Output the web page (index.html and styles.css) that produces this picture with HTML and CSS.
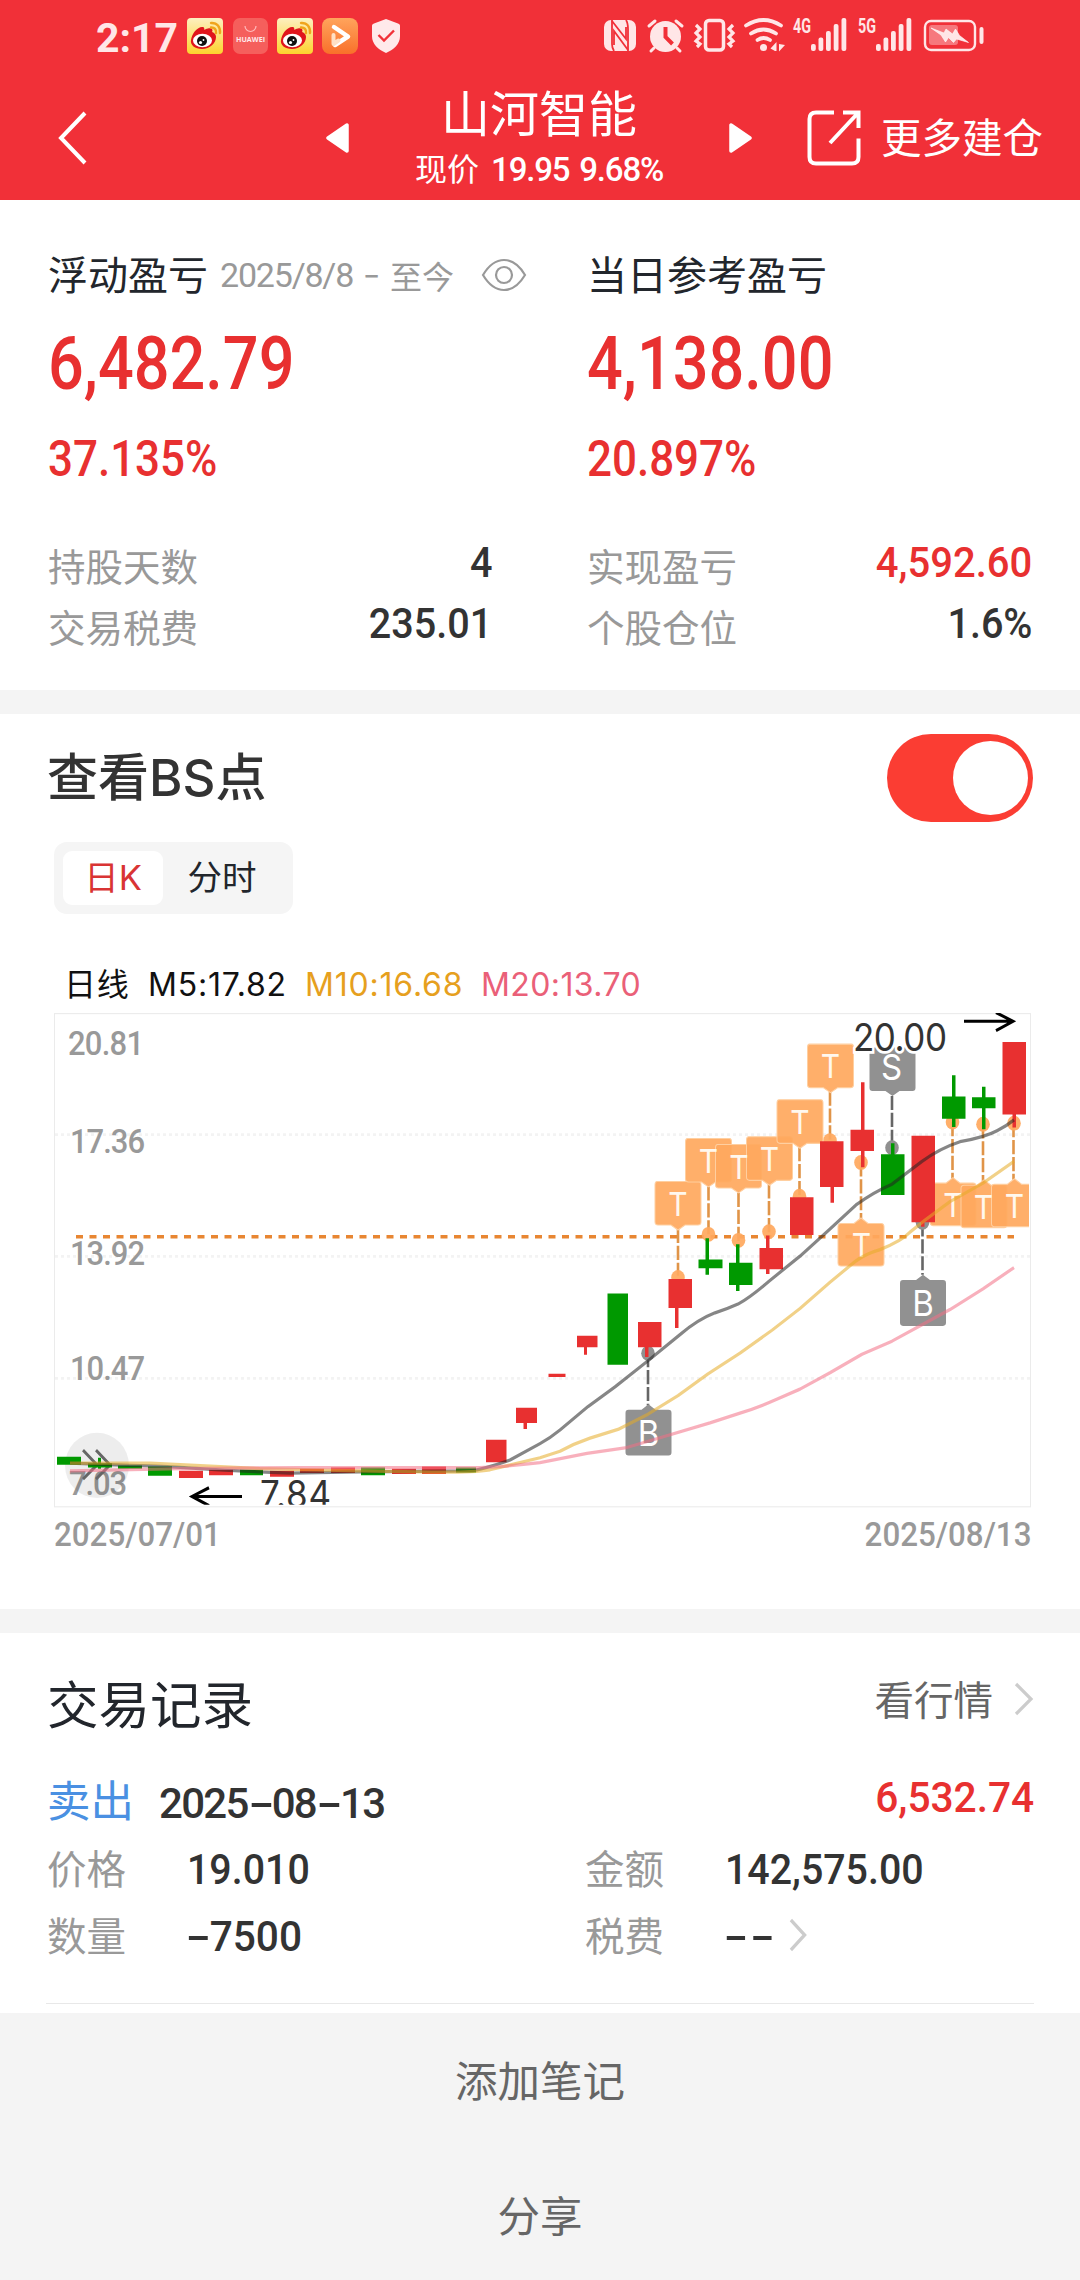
FILE: index.html
```html
<!DOCTYPE html>
<html lang="zh-CN">
<head>
<meta charset="utf-8">
<title>山河智能</title>
<link rel="stylesheet" href="styles.css">
</head>
<body>
<header class="header">
  <div class="status">
    <span class="clock">2:17</span>
    <svg class="app" width="36" height="36" viewBox="0 0 36 36">
      <defs>
        <linearGradient id="wb" x1="0" y1="0" x2="0" y2="1"><stop offset="0" stop-color="#fdf0c0"/><stop offset="1" stop-color="#fdd32e"/></linearGradient>
        <linearGradient id="pl" x1="0" y1="0" x2="0" y2="1"><stop offset="0" stop-color="#ffa45c"/><stop offset="1" stop-color="#f9702a"/></linearGradient>
        <g id="weibo">
          <rect width="36" height="36" rx="4" fill="url(#wb)"/>
          <path d="M4 22C5 15 11 8 16 9c2 .4 1 3 1 3s6-3 8-1c1 1 0 3 0 3s4 1 4 5c0 6-6 12-14 12C8 31 3 27 4 22z" fill="#e0151c"/>
          <ellipse cx="15.500" cy="22.500" rx="9.500" ry="6.700" fill="#fff"/>
          <circle cx="15" cy="23" r="5" fill="#111"/>
          <circle cx="13.500" cy="24.500" r="1.600" fill="#fff"/><circle cx="16.500" cy="22" r=".9" fill="#fff"/>
          <path d="M24 5c6-.5 9.500 4 9 10M24 9.500c3.500-.2 5.500 2 5 5.500" fill="none" stroke="#f0a51c" stroke-width="2.400" stroke-linecap="round"/>
        </g>
      </defs>
      <use href="#weibo"/>
    </svg>
    <svg class="app app-mall" width="35" height="36" viewBox="0 0 35 36">
      <rect width="35" height="36" rx="7" fill="#f55f5c"/>
      <path d="M12 8a5.500 5.500 0 0 0 11 0" fill="none" stroke="#fbb" stroke-width="1.200"/>
      <text x="17.500" y="24" class="mall-name" textLength="29" lengthAdjust="spacingAndGlyphs">HUAWEI</text>
    </svg>
    <svg class="app" width="36" height="36" viewBox="0 0 36 36"><use href="#weibo"/></svg>
    <svg class="app" width="36" height="36" viewBox="0 0 36 36">
      <rect width="36" height="36" rx="8" fill="url(#pl)"/>
      <path d="M12 9l14 9.500L13 27" fill="none" stroke="#fff" stroke-width="4.500" stroke-linecap="round" stroke-linejoin="round"/>
      <path d="M11.500 17v9l5-3.500" fill="none" stroke="#ffe0c4" stroke-width="4" stroke-linecap="round" stroke-linejoin="round"/>
    </svg>
    <svg class="shield" width="28" height="34" viewBox="0 0 28 34">
      <path d="M14 0l12 4.500c1.500.6 2 1 2 2.500v10c0 8-6 13.500-14 17C6 30.500 0 25 0 17V7c0-1.500.5-1.900 2-2.500z" fill="#ffe9ea"/>
      <path d="M6.500 16l5.500 5.500 10-10" fill="none" stroke="#f13038" stroke-width="2.400"/>
    </svg>
    <svg class="tray" width="384" height="50" viewBox="602 12 384 50" fill="#ffe6e7" stroke="none">
      <rect x="604" y="21" width="32" height="31" rx="7"/>
      <path d="M612 21v24q0 4 2 7M628 52V30q0-6-2-9" fill="none" stroke="#f13038" stroke-width="1.800"/>
      <path d="M612 22l14 18V28M628 51l-14-19v14" fill="none" stroke="#f13038" stroke-width="1.800"/>
      <circle cx="665.500" cy="37.500" r="15.500"/>
      <path d="M649 27l6-5M682 27l-6-5M654 49l-3 3M677 49l3 3" stroke="#ffe6e7" stroke-width="3" stroke-linecap="round"/>
      <path d="M665.500 28v10l7 7" fill="none" stroke="#f13038" stroke-width="4"/>
      <rect x="705.500" y="21.500" width="18" height="29.500" rx="3.500" fill="none" stroke="#ffe6e7" stroke-width="3.500"/>
      <path d="M696 26l4 4-4 4 4 4-4 4 4 3-3 3M733 26l-4 4 4 4-4 4 4 4-4 3 3 3" fill="none" stroke="#ffe6e7" stroke-width="3.200"/>
      <path d="M746 26.500q17.500-11 35 0M751 34.500q12.500-8 25 0M757.500 41q6-4 12.500 0" fill="none" stroke="#ffe6e7" stroke-width="3.800" stroke-linecap="round"/>
      <circle cx="763.500" cy="48.500" r="3.500"/>
      <path d="M770.500 49.500l6-6.500v9h-1.500zM779 45l6 1-6 6.500z"/>
      <text x="793" y="34" class="net" textLength="18" lengthAdjust="spacingAndGlyphs">4G</text>
      <g id="bars"><rect x="811" y="45" width="4.800" height="7" rx="2"/><rect x="818.500" y="38.500" width="4.800" height="13.500" rx="2"/><rect x="826" y="32" width="4.800" height="20" rx="2"/><rect x="833.700" y="25" width="4.800" height="27" rx="2"/><rect x="841.500" y="19" width="4.800" height="33" rx="2"/></g>
      <text x="858" y="34" class="net" textLength="18" lengthAdjust="spacingAndGlyphs">5G</text>
      <use href="#bars" x="65"/>
      <rect x="925" y="22" width="50" height="29" rx="6" fill="none" stroke="#ffe6e7" stroke-width="2.400"/>
      <rect x="929" y="26" width="29" height="20" rx="3" opacity=".4"/>
      <rect x="979.500" y="28" width="4" height="17" rx="2"/>
      <path d="M931 29l13 5 2-4 6.500 5 3-5 4 6.500 9 7-12-3.500-3 3.500-5-5-3 4.500-4.500-7z" stroke="#fff" stroke-width=".6"/>
    </svg>
  </div>
  <nav class="nav">
    <svg class="back" width="30" height="54" viewBox="0 0 30 54"><path d="M27 2L3 27l24 25" fill="none" stroke="#fff" stroke-width="4"/></svg>
    <svg class="prev" width="24" height="30" viewBox="0 0 24 30"><path d="M2 15L21 2v26z" fill="#fff" stroke="#fff" stroke-width="3.500" stroke-linejoin="round"/></svg>
    <div class="stock">
      <h1>山河智能</h1>
      <div class="quote">现价 <span class="quote-num">19.95 9.68%</span></div>
    </div>
    <svg class="next" width="24" height="30" viewBox="0 0 24 30"><path d="M22 15L3 2v26z" fill="#fff" stroke="#fff" stroke-width="3.500" stroke-linejoin="round"/></svg>
    <svg class="open" width="54" height="56" viewBox="0 0 54 56" fill="none" stroke="#fff" stroke-width="4"><path d="M27 2.500H9Q2.500 2.500 2.500 9v38q0 6.500 6.500 6.500h36q6.500 0 6.500-6.500V28.500"/><path d="M36 2.500h15.500V18M51 3L23 33"/></svg>
    <span class="more">更多建仓</span>
  </nav>
</header>

<section class="profit">
  <div class="col">
    <div class="cap">浮动盈亏<span class="range"><span class="range-num">2025/8/8</span><span class="wide">-</span>至今</span>
      <svg class="eye" width="46" height="34" viewBox="0 0 46 34" fill="none" stroke="#999" stroke-width="2.200"><path d="M2 17Q11 2 23 2t21 15Q35 32 23 32T2 17z"/><circle cx="23" cy="17" r="8"/></svg></div>
    <div class="big">6,482.79</div>
    <div class="pct">37.135%</div>
    <div class="pair"><span>持股天数</span><b class="v">4</b></div>
    <div class="pair"><span>交易税费</span><b class="v">235.01</b></div>
  </div>
  <div class="col col-day">
    <div class="cap">当日参考盈亏</div>
    <div class="big">4,138.00</div>
    <div class="pct">20.897%</div>
    <div class="pair"><span>实现盈亏</span><b class="v up">4,592.60</b></div>
    <div class="pair"><span>个股仓位</span><b class="v">1.6%</b></div>
  </div>
</section>

<section class="bs">
  <div class="bs-head"><h2>查看BS点</h2><div class="toggle"><i></i></div></div>
  <div class="tabs"><span class="tab on">日K</span><span class="tab">分时</span></div>
  <div class="legend"><span class="l0">日线</span><span class="l5">M5:17.82</span><span class="l10">M10:16.68</span><span class="l20">M20:13.70</span></div>
  <svg class="chart" width="1080" height="497" viewBox="0 1011 1080 456" preserveAspectRatio="none">
    <defs>
      <clipPath id="plot"><rect x="55" y="1012" width="974" height="451"/></clipPath>
      <g id="above"><path d="M-21-.5h42q2 0 2 3v34q0 3-3 3H7L0 44l-7-4.500h-13q-3 0-3-3v-34q0-3 2-3z"/></g>
      <g id="below"><path d="M-20 0h13l7-5 7 5h13q3 0 3 3v33q0 3-3 3h-40q-3 0-3-3V3q0-3 3-3z"/></g>
      <g id="buy"><path d="M-20 0h13l7-5 7 5h13q3 0 3 3v36q0 3-3 3h-40q-3 0-3-3V3q0-3 3-3z"/></g>
    </defs>
    <g fill="none" stroke="#ebebeb">
      <rect x="54.500" y="1012.500" width="976" height="452.500"/>
      <path d="M55 1123.500H1030M55 1235.300H1030M55 1347.200H1030" stroke="#f3f3f3" stroke-width="2.500" stroke-dasharray="3 3"/>
    </g>
    <path d="M76 1217.300H1014" stroke="#e88632" stroke-width="3.200" stroke-dasharray="7 6.500"/>
    <g class="axis">
      <text x="68" y="1050" textLength="76">20.81</text><text x="70" y="1140.500" textLength="75">17.36</text>
      <text x="70" y="1243" textLength="75">13.92</text><text x="70" y="1348.500" textLength="75">10.47</text><text x="69" y="1454" textLength="58">7.03</text>
    </g>
    <ellipse cx="97" cy="1427" rx="32" ry="30" fill="#000" opacity=".07"/>
    <path d="M83 1413l14 13.500-14 13M96 1413l14 13.500-14 13" fill="none" stroke="#666" stroke-width="2.800"/>
    <g clip-path="url(#plot)">
      <g stroke-width="2.600" stroke-dasharray="13 2.500" stroke="#e09448">
        <path d="M678 1210v43M708.500 1171v44M738.500 1177v44M769 1169v44M799.500 1135v45M830 1084v46M861 1149v52M952.500 1112v52M983 1114v54M1013.500 1113v52"/>
        <path stroke="#666" d="M892 1088v48M648 1324v48M922.500 1204v48"/>
      </g>
      <g fill="#ffa95f" opacity=".93">
        <circle cx="678" cy="1254.500" r="6.800"/><circle cx="708.500" cy="1215" r="6.800"/><circle cx="738.500" cy="1220.500" r="6.800"/><circle cx="769" cy="1212.500" r="6.800"/><circle cx="799.500" cy="1180" r="6.800"/><circle cx="830" cy="1129" r="6.800"/><circle cx="861" cy="1149" r="6.800"/><circle cx="952.500" cy="1112" r="6.800"/><circle cx="983" cy="1114" r="6.800"/><circle cx="1014" cy="1113" r="6.800"/>
      </g>
      <g fill="#909090"><circle cx="892" cy="1135.500" r="6.800"/><circle cx="648" cy="1324" r="6.800"/><circle cx="922.500" cy="1204" r="6.800"/></g>
      <g fill="#ffa95f" fill-opacity=".93" stroke="#ffcfa0" stroke-width="1">
        <use href="#above" x="678" y="1167"/><use href="#above" x="708.500" y="1127.500"/><use href="#above" x="738.500" y="1133"/><use href="#above" x="769.500" y="1126"/><use href="#above" x="800" y="1092"/><use href="#above" x="830.500" y="1041"/>
        <use href="#below" x="861" y="1205"/><use href="#below" x="953" y="1168"/><use href="#below" x="984" y="1170"/><use href="#below" x="1014.500" y="1169"/>
      </g>
      <g fill="#919191"><use href="#above" x="892.500" y="1044"/><use href="#buy" x="648.500" y="1376"/><use href="#buy" x="923" y="1257"/></g>
      <g class="mark">
        <text x="678" y="1198">T</text><text x="708.500" y="1159">T</text><text x="739" y="1164">T</text><text x="769.500" y="1157">T</text><text x="800" y="1123">T</text><text x="830.500" y="1072">T</text><text x="861.500" y="1236">T</text><text x="953" y="1199">T</text><text x="983.500" y="1201">T</text><text x="1014.500" y="1200">T</text>
      </g>
      <g class="mark mark-bs"><text x="891.500" y="1073.500">S</text><text x="648.500" y="1409">B</text><text x="923" y="1289.500">B</text></g>
      <g fill="#009900">
        <path d="M57 1419h24v7.500H57zM88 1425h24v4H88zM98 1420h3v10h-3zM118 1427h24v3h-24zM148 1428h24v8.500h-24zM240 1431h23v5h-23zM361 1429h24v7h-24zM456 1429h20v4.500h-20z"/>
        <path d="M607.500 1269.300h20.500v65.300h-20.500zM698.500 1238h24v8h-24zM705.500 1218.500h3.500v33.500h-3.500zM729 1241h23.500v20.500H729zM736 1224h3.500v43H736zM881 1141.500h23.500v37.500H881zM891 1131.500h3.500v11h-3.500zM942 1088.500h23.500v20.500H942zM952 1069h3.500v47.500H952zM972 1089.300h23.500v10H972zM982 1079.500h3.500v39H982z"/>
      </g>
      <g fill="#e83030">
        <path d="M179 1432h24v6.500h-24zM209 1431h24v5h-24zM270 1432h24v5.500h-24zM300 1430h24v4h-24zM331 1429h24v5h-24zM392 1430h24v5h-24zM422 1428h24v7h-24zM486 1403.500h20.500v20.500H486zM516 1374h21v14h-21zM523.500 1388h3.500v5.500h-3.500z"/>
        <path d="M548.500 1343h17v3h-17zM577 1308h20.500v10.500H577zM584 1318h3v7.500h-3zM638 1295.500h23.500v23H638zM645 1318h3.500v9.500H645zM668.500 1256h23.500v26.500h-23.500zM675 1282h3.500v19H675zM759.500 1227.500h23.500v19.500h-23.500zM766 1216h3.500v35.500H766zM790 1181h23.500v34.500H790zM820 1129.500h23.500v42H820zM830.500 1171h3.500v15h-3.500zM850.500 1119h23.500v19.500h-23.500zM861 1075.500h3.500v78H861zM911.500 1124.500H935v79.500h-23.500zM921 1203h3.500v5H921zM1002.500 1038.500H1026v66.500h-23.500zM1012.500 1105h3.500v12h-3.500z"/>
      </g>
      <g fill="none" stroke-width="3" stroke-linejoin="round" stroke-opacity=".55">
        <path stroke="#222" d="M70 1425L130 1427Q170 1428 200 1430T290 1434L360 1433L470 1432Q482 1431 510 1422L540 1407Q550 1402 560 1394.500L588 1373L615 1355L648 1331L680 1307Q698 1293 715 1287Q726 1284 738 1279Q750 1273 769 1258L800 1235L830 1210L856 1188Q874 1176 892 1169L922 1148Q940 1136 960 1130Q985 1126 997 1120Q1006 1116 1014 1110"/>
        <path stroke="#e6ac26" d="M70 1425L150 1425L260 1430L360 1432L420 1433Q470 1434 490 1431L540 1420L560 1414Q574 1407 590 1402L618 1394L648 1380L678 1363L708 1343L740 1324L772 1303L800 1283L830 1259L855 1240Q865 1233 880 1229Q902 1221 910 1213L925 1202L950 1185L983 1168L1014 1148"/>
        <path stroke="#f26f85" d="M70 1432L180 1430L300 1429L470 1429Q500 1429 540 1424.500L587 1416L625 1411L655 1403L710 1388L740 1379Q758 1374 775 1367L800 1357L830 1342L862 1325L892 1313L922 1298L950 1284L983 1265L1014 1245.500"/>
      </g>
      <g class="peak"><text x="853" y="1046.500" textLength="94">20.00</text><text x="260" y="1466" textLength="71">7.84</text></g>
      <path d="M964 1019.500h48M996 1011.500l17 8-17 8.500M242 1455.500h-50M209 1447.500l-17 8 17 8.500" fill="none" stroke="#000" stroke-width="2.800"/>
    </g>
  </svg>
  <div class="dates"><span>2025/07/01</span><span>2025/08/13</span></div>
</section>

<section class="trades">
  <div class="trades-head"><h3>交易记录</h3><span class="market">看行情</span><svg class="chev" width="20" height="34" viewBox="0 0 20 34"><path d="M2 2l15 15L2 32" fill="none" stroke="#ccc" stroke-width="3.200"/></svg></div>
  <div class="trade">
    <div class="sell"><span class="side">卖出</span><span class="day">2025<i>-</i>08<i>-</i>13</span><b class="v up">6,532.74</b></div>
    <div class="fields">
      <span>价格</span><b class="v">19.010</b><span>金额</span><b class="v">142,575.00</b>
      <span>数量</span><b class="v qty"><i>-</i>7500</b><span>税费</span><b class="v none"><i>-</i><i>-</i><svg class="chev" width="20" height="34" viewBox="0 0 20 34"><path d="M2 2l15 15L2 32" fill="none" stroke="#ccc" stroke-width="3.500"/></svg></b>
    </div>
  </div>
</section>
<footer class="actions"><a>添加笔记</a><a>分享</a></footer>
</body>
</html>
```
FILE: styles.css
```css
* { box-sizing: border-box; }
body {
  margin: 0;
  width: 1080px;
  height: 2280px;
  overflow: hidden;
  background: #fff;
  color: #22262c;
  font-family: "Noto Sans CJK SC", sans-serif;
  display: flex;
  flex-direction: column;
}
h1, h2, h3 { margin: 0; font-weight: 400; }
svg { display: block; flex: none; }
i { font-style: normal; }

/* header */
.header { height: 200px; background: #f13038; color: #fff; flex: none; }
.status { display: flex; align-items: center; height: 72px; padding-left: 96px; }
.clock {
  width: 91px;
  font: 700 41px/72px Roboto, sans-serif;
  color: #ffe6e7;
  padding-top: 4px;
}
.app { margin-right: 9px; }
.app-mall { margin-left: 1px; }
.mall-name { font: 700 7px "Open Sans", sans-serif; fill: #ffe9ea; text-anchor: middle; }
.shield { margin-left: 5px; }
.tray { margin-left: 202px; }
.net { font: 700 19.500px Roboto, sans-serif; }
.nav { display: flex; height: 128px; align-items: flex-start; }
.back { margin: 39px 0 0 58px; }
.prev { margin: 51px 0 0 238px; }
.stock { width: 378px; text-align: center; }
.stock h1 { font-size: 49px; line-height: 60px; margin-top: 9px; }
.quote { font-size: 32px; line-height: 40px; margin-top: 6px; white-space: pre; }
.quote-num { font: 500 33px/40px Roboto, sans-serif; letter-spacing: -1.200px; word-spacing: 3px; margin-left: 5px; }
.next { margin: 51px 0 0; }
.open { margin: 38px 0 0 55px; }
.more { margin: 34px 0 0 20px; font-size: 40.500px; line-height: 60px; white-space: nowrap; }

/* profit summary */
.profit { display: flex; height: 490px; padding: 45px 48px 0; flex: none; }
.col { width: 444px; margin-right: 95px; }
.col-day { width: 445px; margin-right: 0; }
.cap { display: flex; align-items: center; font-size: 40px; line-height: 56px; height: 56px; white-space: nowrap; }
.range { display: flex; margin-left: 12px; padding-top: 4px; font-size: 32px; color: #999; }
.range-num { font: 400 34px/56px Roboto, sans-serif; letter-spacing: -1.200px; }
.wide { display: inline-block; width: 37px; text-align: center; font-family: Inter, sans-serif; transform: scaleX(1.200); }
.eye { margin: 3px 0 0 27px; }
.big, .pct { font-family: Roboto, sans-serif; font-weight: 500; color: #e83030; transform-origin: left; }
.big { font-size: 75px; line-height: 88px; margin-top: 18px; transform: scaleX(.84); }
.pct { font-size: 50.500px; line-height: 60px; margin: 22px 0 48px; transform: scaleX(.87); }
.pair { display: flex; justify-content: space-between; height: 61px; font-size: 37.500px; line-height: 56px; color: #999; }
.v { font: 500 43px/50px Roboto, sans-serif; color: #333; transform: scaleX(.92); transform-origin: right; }
.up { color: #e83030; }
.pair .up { transform: scaleX(.93); }

/* chart */
.bs { height: 919px; border-top: 24px solid #f4f4f4; flex: none; }
.bs-head { display: flex; justify-content: space-between; padding: 20px 47px 0 47px; height: 128px; }
.bs-head h2 { font: 500 51px/88px Inter, "Noto Sans CJK SC", sans-serif; color: #333; }
.toggle { width: 146px; height: 88px; padding: 7px 5px; border-radius: 44px; background: #fb3d33; display: flex; justify-content: flex-end; }
.toggle i { width: 75px; height: 74px; border-radius: 50%; background: #fff; }
.tabs { display: flex; width: 239px; height: 72px; margin-left: 54px; padding: 9px; border-radius: 13px; background: #f5f5f5; }
.tab { width: 100px; text-align: center; font: 400 34.500px/54px Inter, "Noto Sans CJK SC", sans-serif; margin-right: 9px; }
.on { background: #fff; border-radius: 9px; color: #d93434; }
.legend { display: flex; height: 53px; margin: 45px 0 0 64px; font: 400 32px/52px Inter, "Noto Sans CJK SC", sans-serif; letter-spacing: .8px; white-space: nowrap; }
.l0 { width: 84px; color: #111; }
.l5 { width: 157px; color: #111; }
.l10 { width: 176px; color: #e6a01e; }
.l20 { color: #ea6078; letter-spacing: .4px; }
.axis { font: 500 31px Roboto, sans-serif; fill: #999; }
.mark { font: 400 30px Inter, sans-serif; fill: #fff8ee; text-anchor: middle; }
.mark-bs { font-size: 33px; fill: #fff; }
.peak { font: 400 35px Inter, sans-serif; fill: #333; stroke: #fff; stroke-width: 5px; paint-order: stroke; }
.dates { display: flex; justify-content: space-between; padding: 0 49px 0 54px; margin-top: 4px; font: 500 33.500px/44px Roboto, sans-serif; color: #999; }
.dates span { transform: scaleX(.935); transform-origin: left; }
.dates span:last-child { transform-origin: right; }

/* trades */
.trades { height: 404px; border-top: 24px solid #f4f4f4; padding: 0 46px; flex: none; }
.trades-head { display: flex; align-items: center; height: 113px; padding-top: 23px; }
.trades-head h3 { font-size: 51.500px; line-height: 70px; margin: 2px auto 0 1px; }
.market { font-size: 39.500px; line-height: 60px; color: #666; margin: -7px 21px 0 0; }
.trades-head .chev { margin-top: -5px; }
.trade { height: 258px; border-bottom: 1px solid #e8e8e8; }
.sell { display: flex; height: 74px; padding: 0 0 0 1px; }
.side { font-size: 43.500px; line-height: 62px; color: #4a90e2; width: 112px; margin-top: 22px; }
.day { font: 500 42px/50px Roboto, sans-serif; letter-spacing: -1.700px; color: #333; margin: 33px auto 0 0; }
.day i, .v i { display: inline-block; width: 24px; text-align: center; transform: scaleX(1.800); }
.sell .v { margin-top: 26px; transform: scaleX(.945); }
.fields { display: grid; grid-template-columns: 140px 398px 140px 1fr; grid-auto-rows: 67px; padding-left: 1px; margin-top: 17px; font-size: 39.500px; line-height: 60px; color: #999; }
.fields .v { transform: scaleX(.915); transform-origin: left; margin-top: 7px; }
.fields .qty { transform: scaleX(.945); }
.fields .none { display: flex; }
.none i { margin-right: 5px; }
.none .chev { margin: 7px 0 0 12px; }

/* bottom actions */
.actions { flex: 1; background: #f4f4f4; display: flex; flex-direction: column; align-items: center; padding-top: 36px; color: #666; font-size: 42.500px; line-height: 60px; gap: 75px; }
```
